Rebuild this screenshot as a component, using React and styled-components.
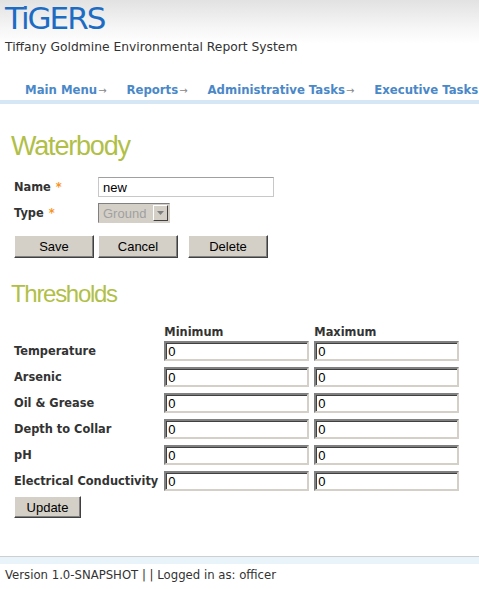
import React from "react";
import styled, { createGlobalStyle } from "styled-components";

const Global = createGlobalStyle`
  html, body { margin: 0; padding: 0; background: #fff; }
  body { font-family: "DejaVu Sans", Verdana, sans-serif; color: #333; }
`;

const Page = styled.div`
  width: 479px;
  min-height: 589px;
  overflow: hidden;
`;

const Header = styled.div`
  background: linear-gradient(to bottom, #e2e2e2 0px, #f6f6f6 28px, #ffffff 44px);
  padding: 2px 0 0 5px;
  height: 67px;
`;

const Logo = styled.div`
  font-family: "DejaVu Sans", Verdana, sans-serif;
  font-size: 31px;
  line-height: 32px;
  color: #1d6cc4;
  letter-spacing: -2px;
`;

const Subtitle = styled.div`
  margin-top: 6px;
  font-size: 12.3px;
  color: #333;
  line-height: 15px;
  white-space: nowrap;
`;

const Nav = styled.nav`
  display: flex;
  white-space: nowrap;
  padding: 0 0 2px 25px;
  gap: 20px;
  align-items: flex-end;
  border-bottom: 4px solid #d5e7f4;
  box-sizing: border-box;
  height: 35px;
`;

const NavItem = styled.a`
  font-size: 11.7px;
  font-weight: bold;
  color: #4a88c8;
  text-decoration: none;
  line-height: 14px;
  &::after {
    content: ${p => (p.$arrow ? '"→"' : '""')};
    color: #888;
    font-weight: normal;
    font-size: 10px;
    margin-left: 1px;
  }
`;

const Content = styled.div`
  padding: 0 14px;
`;

const H1 = styled.h1`
  margin: 26px 0 0 -3px;
  font-family: "Liberation Sans", Arial, sans-serif;
  font-size: 27px;
  font-weight: normal;
  color: #b1bf48;
  letter-spacing: -1.2px;
  line-height: 32px;
`;

const H2 = styled.h2`
  margin: 22px 0 0 -3px;
  font-family: "Liberation Sans", Arial, sans-serif;
  font-size: 24px;
  font-weight: normal;
  color: #b1bf48;
  letter-spacing: -1.3px;
  line-height: 28px;
`;

const FormGrid = styled.div`
  display: grid;
  grid-template-columns: 84px auto;
  row-gap: 6px;
  margin-top: 15px;
  align-items: center;
  justify-items: start;
`;

const Label = styled.label`
  font-size: 11.4px;
  font-weight: bold;
  color: #333;
`;

const Req = styled.span`
  color: #f7941d;
  margin-left: 5px;
`;

const TextInput = styled.input`
  box-sizing: border-box;
  width: ${p => p.$w}px;
  height: 20px;
  border: 1px solid #c8c8c8;
  border-top-color: #a0a0a0;
  padding: 1px 4px;
  font-family: "Liberation Sans", Arial, sans-serif;
  font-size: 13px;
  color: #000;
  outline: none;
`;

const SelectBox = styled.div`
  box-sizing: border-box;
  width: 72px;
  height: 20px;
  background: #d4d0c8;
  border: 1px solid #d4d0c8;
  border-top-color: #808080;
  border-left-color: #808080;
  display: flex;
  align-items: center;
  justify-content: space-between;
  padding-left: 4px;
  font-family: "Liberation Sans", Arial, sans-serif;
  font-size: 13px;
  color: #a0a0a0;
`;

const SelectArrow = styled.div`
  width: 15px;
  height: 16px;
  box-sizing: border-box;
  border: 1px solid;
  border-color: #fff #404040 #404040 #fff;
  display: flex;
  align-items: center;
  justify-content: center;
  margin-right: 1px;
`;

const ButtonRow = styled.div`
  display: flex;
  gap: 4px;
  margin-top: 12px;
`;

const Button = styled.button`
  box-sizing: border-box;
  width: ${p => p.$w}px;
  height: ${p => p.$h || 23}px;
  margin-left: ${p => p.$ml || 0}px;
  margin-top: ${p => p.$mt || 0}px;
  background: #d4d0c8;
  border: 1px solid;
  border-color: #ffffff #404040 #404040 #ffffff;
  box-shadow: inset -1px -1px 0 #808080;
  font-family: "Liberation Sans", Arial, sans-serif;
  font-size: 13px;
  color: #000;
  padding: 0;
  display: block;
`;

const Table = styled.table`
  border-collapse: collapse;
  margin-top: 18px;
  margin-left: -2px;
`;

const Th = styled.th`
  text-align: left;
  font-size: 11.4px;
  font-weight: bold;
  color: #333;
  padding: 0 2px 0 3px;
  height: 12px;
  line-height: 12px;
  vertical-align: bottom;
`;

const RowLabel = styled.td`
  font-size: 11.4px;
  font-weight: bold;
  color: #333;
  padding: 0 3px 0 2px;
  height: 26px;
  white-space: nowrap;
`;

const Cell = styled.td`
  padding: 0 2px 0 3px;
  height: 26px;
`;

const NumInput = styled.input`
  box-sizing: border-box;
  width: 145px;
  height: 20px;
  border: 2px solid;
  border-color: #808080 #d4d0c8 #d4d0c8 #808080;
  box-shadow: inset 1px 1px 0 #404040;
  padding: 1px 2px;
  font-family: "Liberation Sans", Arial, sans-serif;
  font-size: 13px;
  color: #000;
  outline: none;
  background: #fff;
  display: block;
`;

const Footer = styled.div`
  margin-top: 38px;
  border-top: 1px solid #cfcfcf;
`;

const FooterBand = styled.div`
  height: 7px;
  background: #e8f3fa;
`;

const FooterText = styled.div`
  padding: 4px 0 0 5px;
  font-size: 11.7px;
  color: #333;
  line-height: 15px;
  white-space: nowrap;
`;

const rows = [
  "Temperature",
  "Arsenic",
  "Oil & Grease",
  "Depth to Collar",
  "pH",
  "Electrical Conductivity",
];

export default function App() {
  return (
    <Page>
      <Global />
      <Header>
        <Logo>TiGERS</Logo>
        <Subtitle>Tiffany Goldmine Environmental Report System</Subtitle>
      </Header>
      <Nav>
        <NavItem $arrow>Main Menu</NavItem>
        <NavItem $arrow>Reports</NavItem>
        <NavItem $arrow>Administrative Tasks</NavItem>
        <NavItem>Executive Tasks</NavItem>
      </Nav>
      <Content>
        <H1>Waterbody</H1>
        <FormGrid>
          <Label>Name<Req>*</Req></Label>
          <TextInput $w={176} defaultValue="new" />
          <Label>Type<Req>*</Req></Label>
          <SelectBox>
            Ground
            <SelectArrow>
              <svg width="7" height="4" viewBox="0 0 7 4">
                <path d="M0 0h7L3.5 4z" fill="#808080" />
              </svg>
            </SelectArrow>
          </SelectBox>
        </FormGrid>
        <ButtonRow>
          <Button $w={80}>Save</Button>
          <Button $w={80}>Cancel</Button>
          <Button $w={80} $ml={6}>Delete</Button>
        </ButtonRow>
        <H2>Thresholds</H2>
        <Table>
          <thead>
            <tr>
              <Th></Th>
              <Th>Minimum</Th>
              <Th>Maximum</Th>
            </tr>
          </thead>
          <tbody>
            {rows.map(r => (
              <tr key={r}>
                <RowLabel>{r}</RowLabel>
                <Cell><NumInput defaultValue="0" /></Cell>
                <Cell><NumInput defaultValue="0" /></Cell>
              </tr>
            ))}
          </tbody>
        </Table>
        <Button $w={67} $h={22} $mt={2}>Update</Button>
      </Content>
      <Footer>
        <FooterBand />
        <FooterText>Version 1.0-SNAPSHOT | | Logged in as: officer</FooterText>
      </Footer>
    </Page>
  );
}
